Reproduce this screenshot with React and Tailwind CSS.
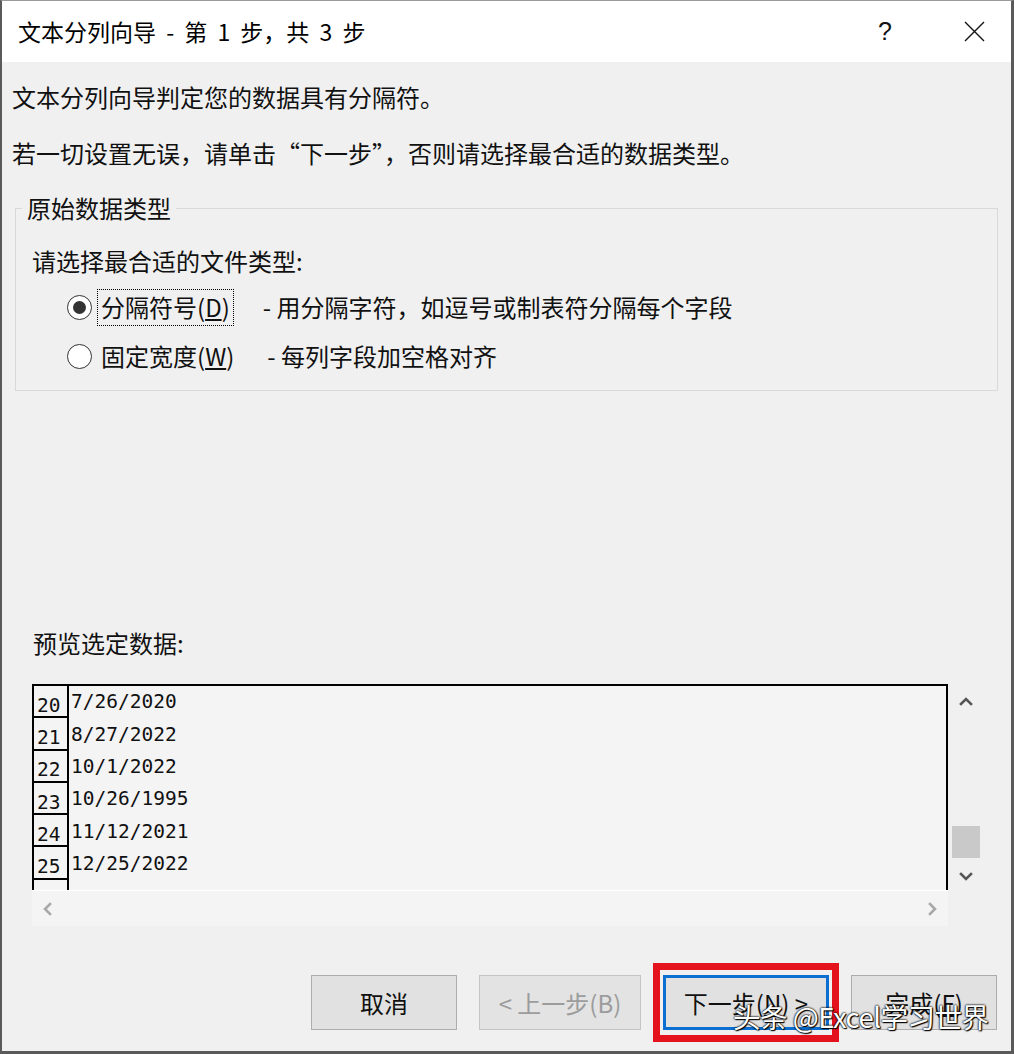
import React from "react";

const rows = [
  { n: 20, v: "7/26/2020" },
  { n: 21, v: "8/27/2022" },
  { n: 22, v: "10/1/2022" },
  { n: 23, v: "10/26/1995" },
  { n: 24, v: "11/12/2021" },
  { n: 25, v: "12/25/2022" },
  { n: "", v: "" },
];

const Radio = ({ checked }) => (
  <span className="flex h-[25px] w-[25px] shrink-0 items-center justify-center rounded-full border-[1.5px] border-[#333] bg-white">
    {checked && <span className="h-[13px] w-[13px] rounded-full bg-[#333]" />}
  </span>
);

const Chevron = ({ dir, className }) => {
  const d = {
    up: "M3 10 L8 5 L13 10",
    down: "M3 6 L8 11 L13 6",
    left: "M10 3 L5 8 L10 13",
    right: "M6 3 L11 8 L6 13",
  }[dir];
  return (
    <svg width="16" height="16" viewBox="0 0 16 16" className={className}>
      <path d={d} fill="none" stroke="currentColor" strokeWidth="2.6" strokeLinecap="square" />
    </svg>
  );
};

const App = () => {
  return (
    <div className="relative flex h-[1054px] w-[1014px] flex-col overflow-hidden border-t border-l-2 border-r-[3px] border-b-[3px] border-t-[#9a9a9a] border-l-[#5a5a5a] border-r-[#5a5a5a] border-b-[#5a5a5a] bg-[#f0f0f0] font-['Noto_Sans_CJK_SC',sans-serif] text-[24px] text-[#111]">
      {/* title bar */}
      <div className="flex h-[61px] shrink-0 items-center bg-white pl-4 pr-[26px]">
        <span className="text-[23px] leading-none text-black [word-spacing:5px]">文本分列向导 - 第 1 步，共 3 步</span>
        <span className="ml-auto mr-[72px] font-['Liberation_Sans',sans-serif] text-[25px] leading-none">?</span>
        <svg width="21" height="21" viewBox="0 0 21 21">
          <path d="M1 1 L20 20 M20 1 L1 20" stroke="#111" strokeWidth="1.4" fill="none" />
        </svg>
      </div>

      <div className="flex flex-1 flex-col">
        <p className="ml-[10px] mt-[19px] h-8 leading-8">文本分列向导判定您的数据具有分隔符。</p>
        <p className="ml-[10px] mt-6 h-8 leading-8">若一切设置无误，请单击“下一步”，否则请选择最合适的数据类型。</p>

        <fieldset className="mx-0 ml-[13px] mt-[23px] w-[983px] border border-[#d9d9d9] p-0 pb-[14px]">
          <legend className="ml-[6px] px-[5px] leading-8">原始数据类型</legend>
          <div className="ml-[16px] mt-[21px] h-8 leading-8">请选择最合适的文件类型:</div>
          <div className="ml-[51px] mt-[10px] flex h-10 items-center">
            <Radio checked />
            <span className="ml-[5px] flex h-[37px] items-center border border-dotted border-black px-[3px] leading-none">
              分隔符号(<u className="underline-offset-2">D</u>)
            </span>
            <span className="ml-[29px] leading-none">- 用分隔字符，如逗号或制表符分隔每个字段</span>
          </div>
          <div className="ml-[51px] mt-[9px] flex h-10 items-center">
            <Radio />
            <span className="ml-[5px] flex h-[37px] items-center border border-transparent px-[3px] leading-none">
              固定宽度(<u className="underline-offset-2">W</u>)
            </span>
            <span className="ml-[29px] leading-none">- 每列字段加空格对齐</span>
          </div>
        </fieldset>

        <p className="ml-[31px] mt-[236px] h-8 leading-8">预览选定数据:</p>

        <div className="ml-[30px] mt-[25px] flex">
          <div className="flex flex-col">
            <div className="h-[206px] w-[916px] overflow-hidden border-x-2 border-t-2 border-black bg-[#f4f4f4] font-['DejaVu_Sans_Mono',monospace] text-[19.5px] text-[#111]">
              {rows.map((r, i) => (
                <div key={i} className="flex h-[32.3px]">
                  <span className="flex w-[35px] shrink-0 items-end border-r-2 border-b-2 border-black pb-[1px] pl-[3px] leading-none">
                    {r.n}
                  </span>
                  <span className="flex items-center pl-[2px] leading-none">{r.v}</span>
                </div>
              ))}
            </div>
            <div className="flex h-[36px] items-center justify-between border-t border-white bg-[#f4f4f4] px-[8px] text-[#a8a8a8]">
              <Chevron dir="left" />
              <Chevron dir="right" />
            </div>
          </div>
          <div className="ml-[2px] flex h-[206px] w-[32px] flex-col items-center text-[#555]">
            <Chevron dir="up" className="mt-[10px]" />
            <div className="mt-[116px] h-[32px] w-[28px] bg-[#c9c9c9]" />
            <Chevron dir="down" className="mt-[10px]" />
          </div>
        </div>

        <div className="mt-[49px] flex justify-end gap-[22px] pr-[14px]">
          <button className="h-[55px] w-[146px] border border-[#adadad] bg-[#e1e1e1] leading-none">取消</button>
          <button className="h-[55px] w-[162px] border border-[#c4c4c4] bg-[#e3e3e3] leading-none text-[#9c9c9c]">
            &lt; 上一步(B)
          </button>
          <div className="relative">
            <span className="absolute -inset-x-[10px] -inset-y-[12px] border-[7px] border-[#e4121c]" />
            <button className="relative h-[55px] w-[166px] border-[3px] border-[#0a6fd1] bg-[#e1e1e1] leading-none">
              下一步(<u className="underline-offset-2">N</u>) &gt;
            </button>
          </div>
          <button className="h-[55px] w-[146px] border border-[#adadad] bg-[#e1e1e1] leading-none">
            完成(<u className="underline-offset-2">F</u>)
          </button>
        </div>
      </div>

      {/* watermark */}
      <span className="absolute left-[731px] top-[1002px] text-[27.5px] leading-none tracking-[-0.5px] text-white [text-shadow:0_0_2px_#000,0_0_2px_#000,1px_1px_1px_#000]">
        头条 @Excel学习世界
      </span>
    </div>
  );
};

export default App;
